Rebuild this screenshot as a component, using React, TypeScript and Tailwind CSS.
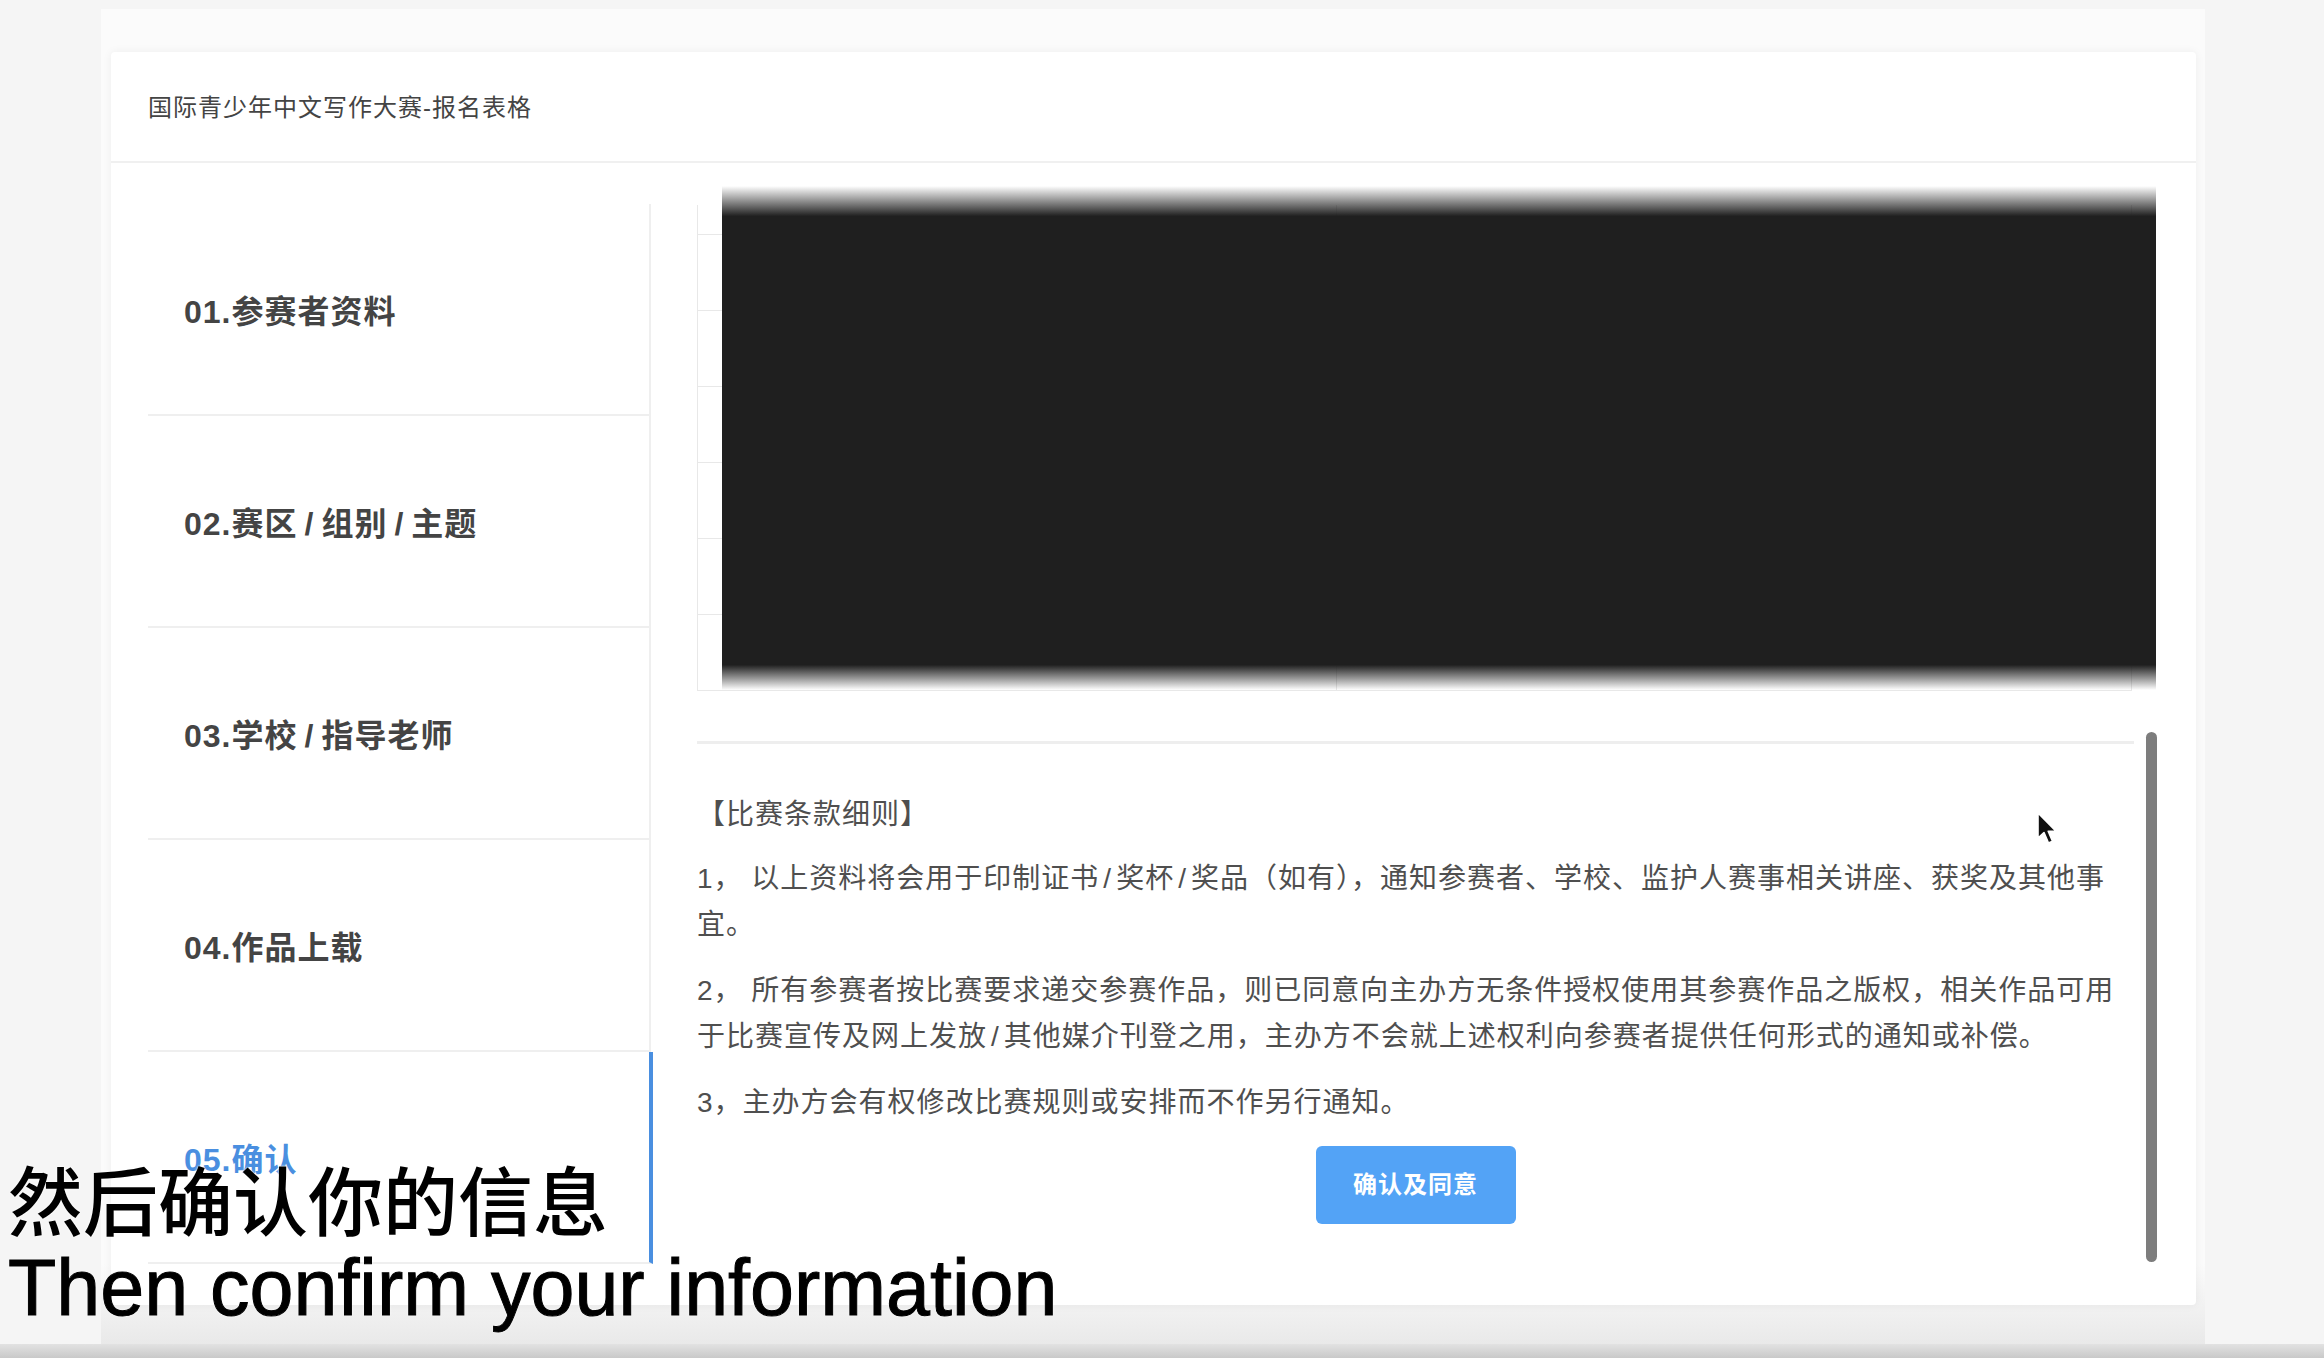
import React from "react";

const steps = [
  { no: "01.", label: "参赛者资料" },
  { no: "02.", label: "赛区/组别/主题" },
  { no: "03.", label: "学校/指导老师" },
  { no: "04.", label: "作品上载" },
  { no: "05.", label: "确认", active: true },
];

function Slashed({ text, gap }: { text: string; gap: string }) {
  const parts = text.split("/");
  return (
    <>
      {parts.map((p, i) => (
        <React.Fragment key={i}>
          {i > 0 && <span className={gap}>/</span>}
          {p}
        </React.Fragment>
      ))}
    </>
  );
}

function Cursor() {
  return (
    <svg
      className="absolute left-[2036px] top-[811px]"
      width="22"
      height="36"
      viewBox="0 0 22 36"
    >
      <path
        d="M2 2 L2 27 L8 21.5 L12.5 32 L16.5 30.3 L12.2 20.2 L20 20.2 Z"
        fill="#111"
        stroke="#fff"
        strokeWidth="1.6"
        strokeLinejoin="round"
      />
    </svg>
  );
}

export default function App() {
  return (
    <div className="relative flex h-[1358px] w-[2324px] flex-col overflow-hidden bg-[#f5f5f5] font-['Liberation_Sans','Noto_Sans_CJK_SC',sans-serif]">
      <div className="flex-1 pl-[101px] pt-[9px]">
        <div className="h-full w-[2104px] bg-[linear-gradient(to_bottom,#fbfbfb_94%,#e9e9e9)] pl-[10px] pt-[43px]">
          <div className="h-[1253px] w-[2085px] rounded-[4px] bg-white shadow-[0_0_10px_rgba(0,0,0,0.06)]">
            {/* header */}
            <div className="flex h-[111px] items-center border-b-2 border-[#f0f0f0] pl-[37px] pt-[3px] text-[24px] tracking-[1px] text-[#444]">
              国际青少年中文写作大赛-报名表格
            </div>

            <div className="flex items-start pl-[37px]">
              {/* steps */}
              <div className="mt-[41px] w-[503px]">
                {steps.map((s) => (
                  <div
                    key={s.no}
                    className={
                      s.active
                        ? "-mr-[2px] flex h-[212px] items-center border-b-2 border-r-4 border-b-[#efefef] border-r-[#4a8fe0] pl-[36px] pt-[6px] text-[32px] font-semibold tracking-[1px] text-[#4a8fe0]"
                        : "flex h-[212px] items-center border-b-2 border-r-2 border-[#efefef] pl-[36px] pt-[6px] text-[32px] font-semibold tracking-[1px] text-[#444]"
                    }
                  >
                    {s.no}
                    <Slashed text={s.label} gap="mx-[7px]" />
                  </div>
                ))}
              </div>

              {/* content */}
              <div className="ml-[46px] mt-[42px] w-[1460px]">
                <div className="relative w-[1435px] border-x border-b border-[#e8e8e8]">
                  <div className="grid h-[30px] grid-cols-[639px_1fr] border-b border-[#e8e8e8]">
                    <div className="border-r border-[#e8e8e8]" />
                    <div />
                  </div>
                  {[0, 1, 2, 3, 4, 5].map((r) => (
                    <div
                      key={r}
                      className={
                        r < 5
                          ? "grid h-[76px] grid-cols-[639px_1fr] border-b border-[#e8e8e8]"
                          : "grid h-[75px] grid-cols-[639px_1fr]"
                      }
                    >
                      <div className="border-r border-[#e8e8e8]" />
                      <div />
                    </div>
                  ))}
                  {/* redacted block over the table */}
                  <div className="absolute left-[24px] top-[-19px] h-[504px] w-[1434px] bg-[linear-gradient(to_bottom,rgba(31,31,31,0)_0%,#1f1f1f_6%,#1f1f1f_95%,rgba(31,31,31,0)_100%)]" />
                </div>

                <div className="mt-[41px] flex items-start">
                  <div className="mt-[9px] w-[1437px] border-t-[3px] border-[#eeeeee] pt-[48px]">
                    <div className="w-[1425px] text-[28px] leading-[46px] tracking-[1px] text-[#4f4f4f]">
                      <p>【比赛条款细则】</p>
                      <p className="mt-[18px]">
                        <Slashed
                          text="1， 以上资料将会用于印制证书/奖杯/奖品（如有），通知参赛者、学校、监护人赛事相关讲座、获奖及其他事宜。"
                          gap="mx-[4px]"
                        />
                      </p>
                      <p className="mt-[20px]">
                        <Slashed
                          text="2， 所有参赛者按比赛要求递交参赛作品，则已同意向主办方无条件授权使用其参赛作品之版权，相关作品可用于比赛宣传及网上发放/其他媒介刊登之用，主办方不会就上述权利向参赛者提供任何形式的通知或补偿。"
                          gap="mx-[4px]"
                        />
                      </p>
                      <p className="mt-[20px]">3，主办方会有权修改比赛规则或安排而不作另行通知。</p>
                    </div>
                    <div className="mt-[20px] flex justify-center">
                      <button className="h-[78px] w-[200px] rounded-[6px] bg-[#53a3f6] text-[24px] font-bold tracking-[1px] text-white">
                        确认及同意
                      </button>
                    </div>
                  </div>
                  <div className="ml-[12px] h-[530px] w-[11px] rounded-full bg-[#7d7d7d]" />
                </div>
              </div>
            </div>
          </div>
        </div>
      </div>
      <div className="h-[14px] bg-[linear-gradient(to_bottom,#e2e2e2,#c9c9c9)]" />

      <Cursor />

      {/* video subtitles */}
      <div className="absolute left-[8px] top-[1160px] text-black [text-shadow:0_0_3px_#fff,0_0_1px_#fff]">
        <div className="h-[76px] font-['Noto_Sans_CJK_SC',sans-serif] text-[75px] font-medium leading-[76px]">
          然后确认你的信息
        </div>
        <div className="mt-[12px] font-['Liberation_Sans',sans-serif] text-[79px] leading-[79px] [-webkit-text-stroke:1px_#000]">
          Then confirm your information
        </div>
      </div>
    </div>
  );
}
